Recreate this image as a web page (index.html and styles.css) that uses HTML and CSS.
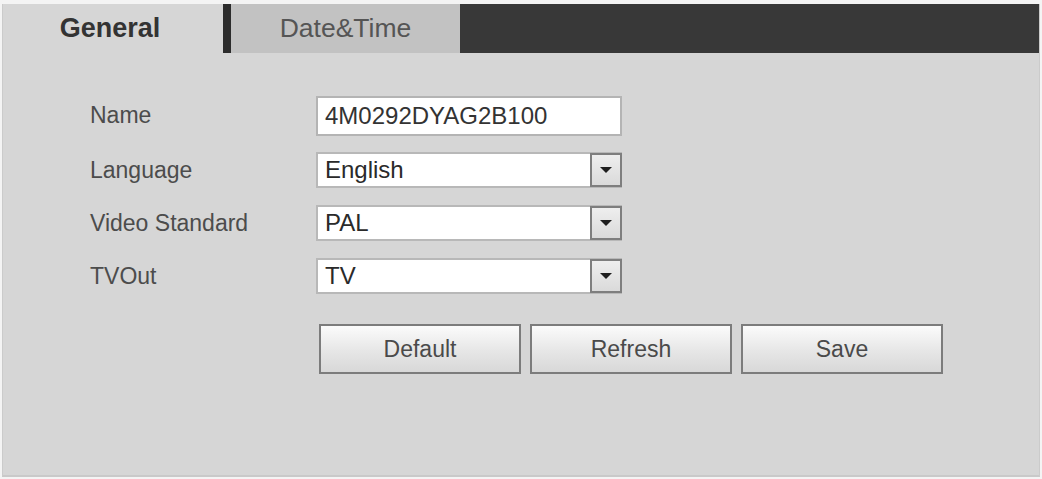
FILE: index.html
```html
<!DOCTYPE html>
<html lang="en">
<head>
<meta charset="utf-8">
<title>General</title>
<link rel="stylesheet" href="styles.css">
</head>
<body>
<div class="panel">
  <div class="tabs">
    <div class="tab tab-active">General</div>
    <div class="tab-gap"></div>
    <div class="tab tab-idle">Date&amp;Time</div>
    <div class="tab-rest"></div>
  </div>
  <div class="form">
    <div class="row row-name">
      <div class="label">Name</div>
      <div class="input">4M0292DYAG2B100</div>
    </div>
    <div class="row">
      <div class="label">Language</div>
      <div class="select"><span class="select-text">English</span><span class="select-btn"><span class="tri"></span></span></div>
    </div>
    <div class="row">
      <div class="label">Video Standard</div>
      <div class="select"><span class="select-text">PAL</span><span class="select-btn"><span class="tri"></span></span></div>
    </div>
    <div class="row">
      <div class="label">TVOut</div>
      <div class="select"><span class="select-text">TV</span><span class="select-btn"><span class="tri"></span></span></div>
    </div>
    <div class="buttons">
      <div class="btn">Default</div>
      <div class="btn">Refresh</div>
      <div class="btn">Save</div>
    </div>
  </div>
</div>
</body>
</html>
```

FILE: styles.css
```css
html, body {
  margin: 0;
  padding: 0;
  background: #f4f4f4;
  font-family: "Liberation Sans", Arial, sans-serif;
}

.panel {
  margin: 4px 2px 0 2px;
  height: 473px;
  background: #d6d6d6;
  border-left: 1px solid #cbcbcb;
  border-right: 1px solid #cbcbcb;
  border-bottom: 2px solid #c9c9c9;
  box-sizing: border-box;
}

.tabs {
  display: flex;
  height: 49px;
  background: #383838;
}

.tab {
  display: flex;
  align-items: center;
  justify-content: center;
}

.tab-active {
  width: 220px;
  background: #d6d6d6;
  color: #333;
  font-weight: bold;
  font-size: 27px;
  padding-right: 6px;
  box-sizing: border-box;
}

.tab-gap {
  width: 8px;
  background: #2c2c2c;
}

.tab-idle {
  width: 229px;
  background: #c2c2c2;
  color: #555;
  font-size: 26.5px;
}

.tab-rest {
  flex: 1;
  background: #383838;
}

.form {
  padding: 43px 0 0 87px;
  display: flex;
  flex-direction: column;
  gap: 17px;
}

.row {
  display: flex;
  align-items: center;
  height: 36px;
}

.row-name {
  height: 39px;
}

.label {
  width: 226px;
  font-size: 23px;
  color: #4c4c4c;
}

.input {
  width: 306px;
  height: 40px;
  box-sizing: border-box;
  background: #fff;
  border: 2px solid #b4b4b4;
  font-size: 24px;
  color: #333;
  padding-left: 7px;
  display: flex;
  align-items: center;
}

.select {
  width: 306px;
  height: 36px;
  box-sizing: border-box;
  background: #fff;
  border: 2px solid #b8b8b8;
  display: flex;
  align-items: center;
}

.select-text {
  flex: 1;
  font-size: 24px;
  color: #2a2a2a;
  padding-left: 7px;
}

.select-btn {
  width: 32px;
  height: 34px;
  box-sizing: border-box;
  margin-right: -2px;
  border: 2px solid #7e7e7e;
  background: linear-gradient(#eeeeee, #dadada);
  display: flex;
  align-items: center;
  justify-content: center;
}

.tri {
  width: 0;
  height: 0;
  border-left: 6px solid transparent;
  border-right: 6px solid transparent;
  border-top: 6px solid #1e1e1e;
}

.buttons {
  display: flex;
  gap: 9px;
  margin: 13px 0 0 229px;
}

.btn {
  width: 202px;
  height: 50px;
  box-sizing: border-box;
  border: 2px solid #7c7c7c;
  background: linear-gradient(#fbfbfb, #e6e6e6 55%, #d8d8d8);
  display: flex;
  align-items: center;
  justify-content: center;
  font-size: 23px;
  color: #4a4a4a;
}
```
